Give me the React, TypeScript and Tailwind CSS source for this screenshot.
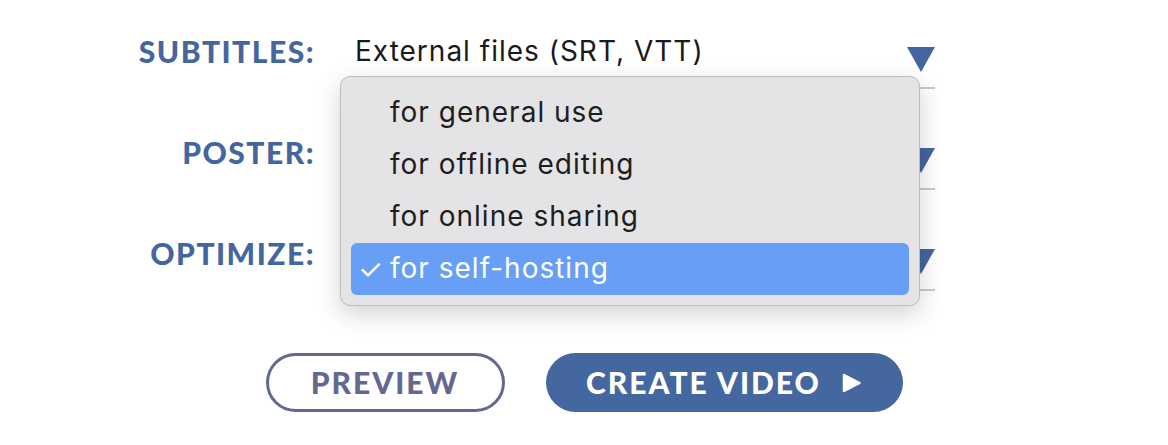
const labelCls =
  "w-[315px] shrink-0 text-right font-['Lato',sans-serif] font-black text-[30px] tracking-[1.5px] text-[#4466a0] leading-none";

const options = [
  "for general use",
  "for offline editing",
  "for online sharing",
  "for self-hosting",
];

const Field = ({ value }: { value?: string }) => (
  <div className="ml-[25px] flex h-[76px] w-[595px] items-center justify-between border-b-2 border-[#cacaca] pl-[15px]">
    <span className="font-['Inter',sans-serif] text-[28px] tracking-[1px] text-[#1a1a1a] mt-[2px]">
      {value}
    </span>
    <svg width="28" height="25" viewBox="0 0 28 25" className="mt-[18px]">
      <polygon points="0,0 28,0 14,25" fill="#44659e" />
    </svg>
  </div>
);

const App = () => {
  const selected = 3;
  return (
    <div className="relative h-[445px] w-[1168px] bg-white">
      <div className="flex flex-col pt-[13px]">
        <div className="flex items-center">
          <div className={labelCls}>SUBTITLES:</div>
          <Field value="External files (SRT, VTT)" />
        </div>
        {/* the values of these two are hidden by the open menu */}
        <div className="mt-[25px] flex items-center">
          <div className={labelCls}>POSTER:</div>
          <Field />
        </div>
        <div className="mt-[25px] flex items-center">
          <div className={labelCls}>OPTIMIZE:</div>
          <Field />
        </div>
      </div>

      <div className="mt-[62px] flex justify-center gap-[41px]">
        <button className="flex h-[59px] w-[239px] items-center justify-center rounded-full border-[3px] border-[#636890] font-['Lato',sans-serif] font-black text-[30px] tracking-[2px] text-[#636890]">
          PREVIEW
        </button>
        <button className="flex h-[59px] w-[357px] items-center justify-center gap-[20px] rounded-full bg-[#45679f] font-['Lato',sans-serif] font-black text-[30px] tracking-[2px] text-white">
          CREATE VIDEO
          <svg width="21" height="20" viewBox="0 0 21 20">
            <path d="M3 2 L18.5 10 L3 18 Z" fill="#fff" stroke="#fff" strokeWidth="2.5" strokeLinejoin="round" />
          </svg>
        </button>
      </div>

      {/* open select menu */}
      <div className="absolute left-[340px] top-[76px] w-[580px] rounded-[10px] border border-[#bdbdbd] bg-[#e4e4e6] py-[10px] shadow-[0_8px_24px_rgba(0,0,0,0.18)]">
        {options.map((opt, i) => (
          <div
            key={opt}
            className={`mx-[10px] flex h-[52px] items-center rounded-[6px] font-['Inter',sans-serif] text-[28px] tracking-[1px] ${
              i === selected ? "bg-[#679ff6] text-white" : "text-[#1e1e1e]"
            }`}
          >
            <span className="w-[39px] pl-[7px] text-[28px]">
              {i === selected ? "✓" : ""}
            </span>
            <span className="-mt-[2px]">{opt}</span>
          </div>
        ))}
      </div>
    </div>
  );
};

export default App;
